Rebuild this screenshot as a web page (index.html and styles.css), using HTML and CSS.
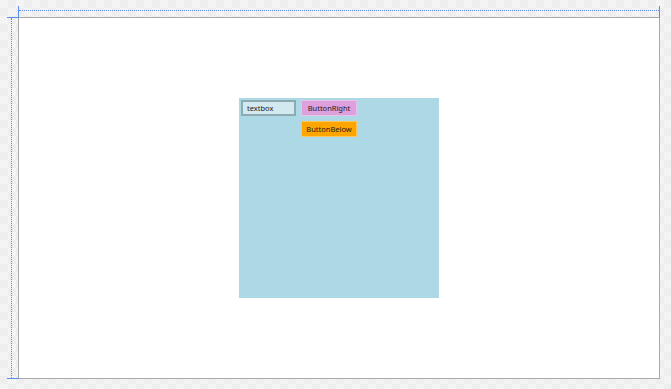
FILE: index.html
```html
<!DOCTYPE html>
<html lang="en">

<head>
    <meta charset="UTF-8">
    <meta name="viewport" content="width=device-width, initial-scale=1.0">
    <title>Designer</title>

    <link rel="stylesheet" href="styles.css">
</head>

<body>

    <div class="frame">
        <!-- designer adorners -->
        <div class="ruler-top"></div>
        <div class="tick tick-left"></div>
        <div class="tick tick-right"></div>
        <div class="ruler-left"></div>
        <div class="mark mark-top"></div>
        <div class="mark mark-bottom"></div>

        <div class="panel">
            <div class="textbox">textbox</div>
            <div class="btn btn-right">ButtonRight</div>
            <div class="btn btn-below">ButtonBelow</div>
        </div>
    </div>

</body>
</html>
```

FILE: styles.css
```css
body {
    margin: 0;
    padding: 17px 0 0 18px;
    height: 389px;
    box-sizing: border-box;
    font-family: "Noto Sans", "Open Sans", sans-serif;
    background-color: #f4f4f4;
    background-image: repeating-conic-gradient(#eeeeee 0 25%, #f4f4f4 0 50%);
    background-size: 16px 16px;
    overflow: hidden;
}

.frame {
    position: relative;
    width: 640px;
    height: 360px;
    background: white;
    border: 1px solid #a9a9a9;
    display: flex;
    align-items: center;
    justify-content: center;
}

.ruler-top {
    position: absolute;
    left: 0;
    right: 0;
    top: -8px;
    border-top: 1px dotted #5b86e6;
}

.tick {
    position: absolute;
    top: -12px;
    width: 1px;
    height: 12px;
    background: #5b8ef0;
}

.tick-left { left: -1px; }
.tick-right { right: -1px; }

.ruler-left {
    position: absolute;
    top: 0;
    bottom: 0;
    left: -8px;
    border-left: 1px dotted #5b86e6;
}

.mark {
    position: absolute;
    left: -12px;
    width: 12px;
    height: 1px;
    background: #5b8ef0;
}

.mark-top { top: -1px; }
.mark-bottom { bottom: -1px; }

.panel {
    width: 200px;
    height: 200px;
    box-sizing: border-box;
    padding: 2px;
    background: #add8e6;
    display: grid;
    grid-template-columns: 55px 56px;
    grid-template-rows: 16px 16px;
    gap: 5px;
    align-content: start;
}

.textbox {
    box-sizing: border-box;
    border: 2px solid #8fa9b2;
    background: #d2e9ef;
    font-size: 7.5px;
    line-height: 12px;
    padding-left: 4px;
    color: #1a1a1a;
}

.btn {
    box-sizing: border-box;
    border: 1px solid rgba(255, 255, 255, 0.35);
    font-size: 7.5px;
    line-height: 14px;
    text-align: center;
    color: #1a1a1a;
}

.btn-right {
    background: #dda0dd;
}

.btn-below {
    grid-column: 2;
    background: #ffa500;
}
```
